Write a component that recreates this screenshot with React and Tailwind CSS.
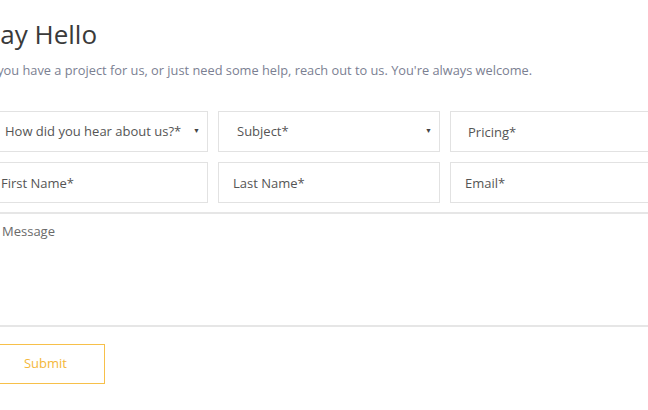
const fieldFont = { fontFamily: '"Open Sans", "Liberation Sans", sans-serif' };

const SelectBox = ({ label }) => (
  <div className="flex h-[41px] items-center justify-between border border-[#e2e2e2] pl-[18px] pr-[7px] text-[13px] text-[#555]">
    <span>{label}</span>
    <span className="text-[7px] text-[#444]">▼</span>
  </div>
);

const InputBox = ({ label, pad = "pl-[14px]" }) => (
  <input
    placeholder={label}
    className={`h-[41px] w-full border border-[#e2e2e2] ${pad} text-[13px] text-[#555] outline-none placeholder:text-[#555]`}
  />
);

export default function App() {
  return (
    <div className="h-[410px] w-[648px] overflow-hidden bg-white" style={fieldFont}>
      <div className="-ml-[14px] w-[686px] pt-[16px]">
        <h1 className="text-[26px] leading-[36px] font-medium text-[#3a3a3a]">Say Hello</h1>
        <p className="mt-[8px] text-[12.8px] leading-[20px] text-[#7b8092]">
          If you have a project for us, or just need some help, reach out to us. You're always welcome.
        </p>

        <form className="mt-[31px]">
          <div className="grid grid-cols-3 gap-[10px]">
            <SelectBox label="How did you hear about us?*" />
            <SelectBox label="Subject*" />
            <InputBox label="Pricing*" pad="pl-[17px]" />
          </div>
          <div className="mt-[10px] grid grid-cols-3 gap-[10px]">
            <InputBox label="First Name*" />
            <InputBox label="Last Name*" />
            <InputBox label="Email*" />
          </div>
          <textarea
            placeholder="Message"
            className="mt-[9px] block h-[115px] w-full resize-none border-2 border-[#e6e6e6] px-[14px] pt-[8px] text-[13px] text-[#555] outline-none placeholder:text-[#6a6a6a]"
          />
          <button
            type="button"
            className="mt-[17px] h-[40px] w-[119px] border border-[#f7c04a] text-[13px] font-medium text-[#f4b73a]"
          >
            Submit
          </button>
        </form>
      </div>
    </div>
  );
}
